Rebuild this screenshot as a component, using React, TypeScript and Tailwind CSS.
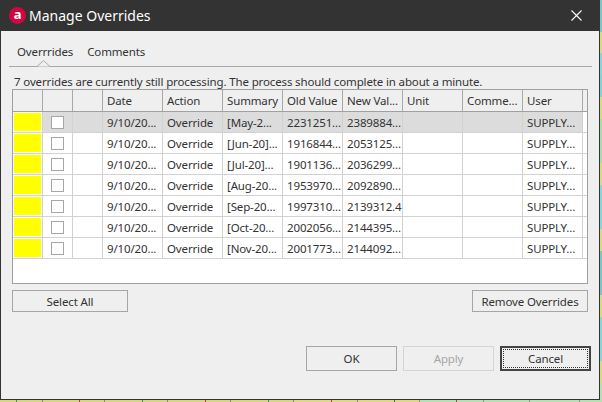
import React from "react";

const rows = [
  ["[May-2...", "2231251...", "2389884..."],
  ["[Jun-20]...", "1916844...", "2053125..."],
  ["[Jul-20]...", "1901136...", "2036299..."],
  ["[Aug-20...", "1953970...", "2092890..."],
  ["[Sep-20...", "1997310...", "2139312.4"],
  ["[Oct-20...", "2002056...", "2144395..."],
  ["[Nov-20...", "2001773...", "2144092..."],
];

const headers = ["Date", "Action", "Summary", "Old Value", "New Val...", "Unit", "Comme...", "User"];

const strip = [
  "h-[32px] bg-[#7cc4c9]",
  "h-[21px] bg-[#d6da80]",
  "h-[22px] bg-[#85d5dc]",
  "h-[22px] bg-[#82d2da]",
  "h-[22px] bg-[#d6da80]",
  "h-[44px] bg-[#a8dcae]",
  "h-[22px] bg-[#d6da80]",
  "h-[44px] bg-[#85d5dc]",
  "h-[22px] bg-[#d6da80]",
  "h-[44px] bg-[#7cc4c9]",
  "h-[22px] bg-[#d6da80]",
  "h-[44px] bg-[#85d5dc]",
  "h-[22px] bg-[#d6da80]",
  "flex-1 bg-[#b4e0b4]",
];

const ticks = [
  "w-[17px] border-[#3f8f5f] bg-[#d6d67c]",
  "w-[26px] border-[#8a8a70] bg-[#d6d67c]",
  "w-[37px] border-[#b04030] bg-[#d6d67c]",
  "w-[25px] border-[#8a8a70] bg-[#d6d67c]",
  "w-[38px] border-[#3f8f5f] bg-[#d6d67c]",
  "w-[25px] border-[#8a8a70] bg-[#d6d67c]",
  "w-[38px] border-[#b04030] bg-[#d6d67c]",
  "w-[25px] border-[#8a8a70] bg-[#d6d67c]",
  "w-[38px] border-[#3f8f5f] bg-[#d6d67c]",
  "w-[25px] border-[#8a8a70] bg-[#d6d67c]",
  "w-[38px] border-[#b04030] bg-[#e0d880]",
  "w-[26px] border-[#8a8a70] bg-[#e0d880]",
  "w-[37px] border-[#3f6f4f] bg-[#e0d880]",
  "w-[25px] border-[#8a9a80] bg-[#e0d880]",
  "w-[37px] border-[#b04030] bg-[#b5e0b0]",
  "w-[27px] border-[#8a9a80] bg-[#b5e0b0]",
  "w-[46px] border-[#8a9a80] bg-[#b5e0b0]",
  "w-[50px] border-[#8a9a80] bg-[#b5e0b0]",
  "flex-1 border-transparent bg-[#b5e0b0]",
];

function Cell({ children, selected }: { children?: React.ReactNode; selected?: boolean }) {
  return (
    <div
      className={`w-[60px] h-full shrink-0 border-r border-[#d2d2d2] pl-1 overflow-hidden whitespace-nowrap leading-[21px] ${
        selected ? "bg-[#dcdcdc]" : ""
      }`}
    >
      {children}
    </div>
  );
}

export default function App() {
  return (
    <div
      className="flex w-[602px] h-[402px] overflow-hidden text-[#333333] text-[11.5px] tracking-[-0.14px]"
      style={{ fontFamily: '"Noto Sans", sans-serif' }}
    >
      <div className="flex flex-col w-[600px] h-full shrink-0">
        <div className="flex flex-col w-[600px] h-[400px] bg-[#efefef] border-l border-r border-b border-[#333333]">
          <div className="flex items-center h-[31px] shrink-0 bg-[#333333] pl-2 pr-[17px]">
            <div className="flex items-center justify-center w-[17px] h-[17px] rounded-full bg-[#d2063f] text-white text-[13px] font-bold leading-none pb-[2px]">
              a
            </div>
            <div className="ml-[3px] text-white text-[14px] tracking-normal leading-none">Manage Overrides</div>
            <svg className="ml-auto" width="11" height="11" viewBox="0 0 11 11">
              <path d="M0.5 0.5L10.5 10.5M10.5 0.5L0.5 10.5" stroke="#ffffff" strokeWidth="1.1" fill="none" />
            </svg>
          </div>

          <div className="flex items-end gap-[14px] h-[36px] ml-[8px] mr-[7px] pl-[8px] pb-[6px] border-b border-[#a8a8a8] relative shrink-0">
            <span className="leading-[16px]">Overrrides</span>
            <span className="leading-[16px]">Comments</span>
            <svg className="absolute left-[27px] -bottom-px" width="15" height="7" viewBox="0 0 15 7">
              <path d="M0 6.5H1L7.5 0.5L14 6.5H15" stroke="#a8a8a8" fill="#efefef" />
            </svg>
          </div>

          <div className="h-[22px] shrink-0 pl-[13px] pt-[6px] leading-[17px] whitespace-nowrap">
            7 overrides are currently still processing. The process should complete in about a minute.
          </div>

          <div className="flex flex-col w-[576px] h-[195px] ml-[11px] shrink-0 bg-white border border-[#a0a0a0]">
            <div className="flex h-[22px] shrink-0 border-b border-[#a0a0a0] bg-[#efefef]">
              <div className="w-[30px] border-r border-[#a8a8a8]" />
              <div className="w-[30px] border-r border-[#a8a8a8]" />
              <div className="w-[30px] border-r border-[#a8a8a8]" />
              {headers.map((h) => (
                <div
                  key={h}
                  className="w-[60px] border-r border-[#a8a8a8] pl-1 overflow-hidden whitespace-nowrap leading-[21px]"
                >
                  {h}
                </div>
              ))}
            </div>
            {rows.map((r, i) => {
              const sel = i === 0;
              return (
                <div key={r[0]} className="flex h-[21px] shrink-0 border-b border-[#d2d2d2]">
                  <div className="flex w-[30px] h-full border-r border-[#d2d2d2] p-px bg-white">
                    <div className="flex-1 bg-[#ffff00]" />
                  </div>
                  <div
                    className={`flex items-center justify-center w-[30px] h-full border-r border-[#d2d2d2] ${
                      sel ? "bg-[#dcdcdc]" : ""
                    }`}
                  >
                    <div className="w-[13px] h-[13px] bg-white border border-[#a6a6a6]" />
                  </div>
                  <div className={`w-[30px] h-full border-r border-[#d2d2d2] ${sel ? "bg-[#dcdcdc]" : ""}`} />
                  <Cell selected={sel}>9/10/20...</Cell>
                  <Cell selected={sel}>Override</Cell>
                  <Cell selected={sel}>{r[0]}</Cell>
                  <Cell selected={sel}>{r[1]}</Cell>
                  <Cell selected={sel}>{r[2]}</Cell>
                  <Cell selected={sel} />
                  <Cell selected={sel} />
                  <Cell selected={sel}>SUPPLY...</Cell>
                </div>
              );
            })}
          </div>

          <div className="flex justify-between w-[576px] ml-[11px] mt-[6px] shrink-0">
            <button className="w-[116px] h-[22px] border border-[#a6a6a6] leading-none pt-px">Select All</button>
            <button className="w-[116px] h-[22px] border border-[#a6a6a6] leading-none pt-px">Remove Overrides</button>
          </div>

          <div className="flex gap-[6px] ml-[305px] mt-[34px] shrink-0">
            <button className="w-[91px] h-[25px] border border-[#a6a6a6] leading-none pt-px">OK</button>
            <button className="w-[91px] h-[25px] border border-[#d4d4d4] text-[#a6a6a6] leading-none pt-px">Apply</button>
            <button className="w-[91px] h-[25px] border-2 border-[#444444] outline-1 outline-dotted outline-[#333333] outline-offset-[-4px] leading-none pt-px">
              Cancel
            </button>
          </div>
        </div>
        <div className="flex flex-1">
          {ticks.map((t, i) => (
            <div key={i} className={`h-full border-r ${t}`} />
          ))}
        </div>
      </div>
      <div className="flex flex-col flex-1 h-full">
        {strip.map((s, i) => (
          <div key={i} className={`shrink-0 ${s}`} />
        ))}
      </div>
    </div>
  );
}
